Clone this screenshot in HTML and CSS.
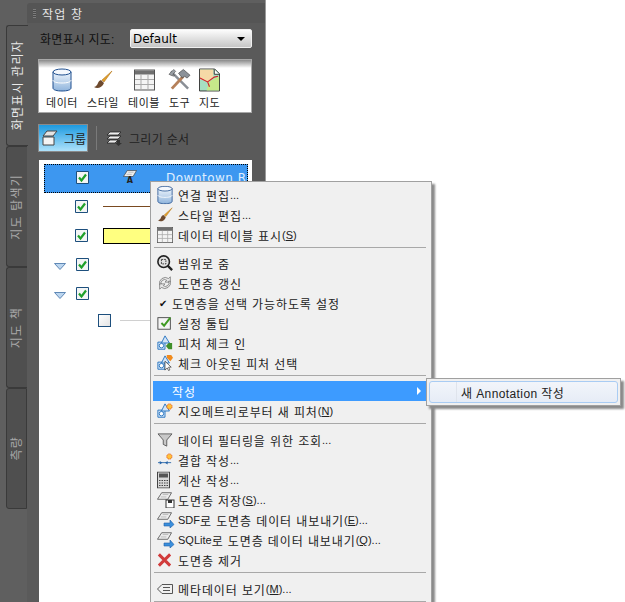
FILE: index.html
```html
<!DOCTYPE html>
<html lang="ko">
<head>
<meta charset="utf-8">
<title>작업 창</title>
<link rel="stylesheet" href="styles.css">
</head>
<body>
<svg class="defs" width="0" height="0">
  <defs>
    <linearGradient id="dbg" x1="0" y1="0" x2="0" y2="1"><stop offset="0" stop-color="#eef5fc"/><stop offset="1" stop-color="#8fb4dc"/></linearGradient>
    <symbol id="db" viewBox="0 0 20 24">
      <path d="M1 4v16c0 2 4 3 9 3s9-1 9-3V4z" fill="url(#dbg)" stroke="#1f4f8f"/>
      <ellipse cx="10" cy="4" rx="9" ry="3" fill="#f4f8fd" stroke="#1f4f8f"/>
      <path d="M1 12c0 2 4 3 9 3s9-1 9-3" fill="none" stroke="#fff"/>
    </symbol>
    <symbol id="brush" viewBox="0 0 20 20">
      <path d="M19 1 9 10l2 2z" fill="#e0a02c" stroke="#b5761a" stroke-width=".6"/>
      <path d="M8 10c-3 1-3 4-4 5-1 1-2 2-3 2 3 2 8 1 10-4z" fill="#6e4a2e"/>
    </symbol>
    <symbol id="table" viewBox="0 0 21 21">
      <rect x=".5" y=".5" width="20" height="20" fill="#f4f4f4" stroke="#555"/>
      <rect x="1" y="1" width="19" height="4" fill="#6f6f6f"/>
      <path d="M7 5v15M14 5v15M1 10h19M1 15h19" stroke="#a9a9a9" fill="none"/>
    </symbol>
    <symbol id="tools" viewBox="0 0 24 24">
      <path d="M3 3l18 18" stroke="#8a8f96" stroke-width="2.6"/>
      <path d="M1 6 6 1l2 2-3 3 2 1-1 1-3-1z" fill="#9aa0a6" stroke="#444" stroke-width=".6"/>
      <path d="M4 21 16 8" stroke="#b5805a" stroke-width="3"/>
      <path d="M11 5l5-4 7 6-3 3-3-2-2 2z" fill="#8c9299" stroke="#333" stroke-width=".6"/>
    </symbol>
    <symbol id="map" viewBox="0 0 22 24">
      <path d="M.5.5h16l5 5v18H.5z" fill="#a7dfc2" stroke="#333"/>
      <path d="M1 1h14v9l-5 4-9-3z" fill="#f6d9a6"/>
      <path d="M10 14l11-6v15H8z" fill="#c6e88a"/>
      <path d="M1 10l8 4 7-5 4-1M9 14l2 5" fill="none" stroke="#d0202a" stroke-width="1.2"/>
      <path d="M16 1v5h5" fill="#fff" stroke="#333"/>
    </symbol>
    <symbol id="layer" viewBox="0 0 16 8">
      <path d="M5 .5h10.500l-4 7H.5z" fill="#eee" stroke="#444" stroke-width=".8"/>
      <path d="M6 2.500h6M4 5h6" stroke="#aaa" stroke-width=".8"/>
    </symbol>
    <symbol id="check" viewBox="0 0 13 13">
      <path d="M.5.5h12v12H.5z" fill="#f3f5f5" stroke="#1d4f7d"/>
      <path d="M3 6.500l2.500 3L10 3.500" fill="none" stroke="#1fa02a" stroke-width="2.200"/>
    </symbol>
    <symbol id="tri" viewBox="0 0 12 7">
      <path d="M.5.500h11L6 6.500z" fill="#bcd6ef" stroke="#5f88b6"/>
    </symbol>
    <symbol id="zoom" viewBox="0 0 18 18">
      <circle cx="7.500" cy="7.500" r="6.500" fill="#e2e2e2" stroke="#222" stroke-width="1.800"/>
      <path d="M12 12l5 5" stroke="#222" stroke-width="2.600"/>
      <path d="M5 5h5v5H5z" fill="none" stroke="#333" stroke-dasharray="2 1"/>
    </symbol>
    <symbol id="refresh" viewBox="0 0 18 18">
      <path d="M3 11a6.500 6.500 0 0 1 10-7l2-2v6h-6l2-2a4 4 0 0 0-6 5z" fill="#e8e8e8" stroke="#6b6b6b" stroke-width=".8"/>
      <path d="M15 7a6.500 6.500 0 0 1-10 7l-2 2v-6h6l-2 2a4 4 0 0 0 6-5z" fill="#e8e8e8" stroke="#6b6b6b" stroke-width=".8"/>
    </symbol>
    <symbol id="tip" viewBox="0 0 18 18">
      <rect x="1" y="3" width="14" height="13" fill="#f4f4f4" stroke="#444"/>
      <path d="M5 9l3 3 7-9" fill="none" stroke="#3f9a23" stroke-width="2.200"/>
    </symbol>
    <symbol id="feat" viewBox="0 0 18 18">
      <path d="M1 8h8v8H1z" fill="#d5e6f8" stroke="#1e6fbe"/>
      <path d="M9 1l5 8H5z" fill="#d5e6f8" stroke="#1e6fbe"/>
      <circle cx="5" cy="12" r="2.500" fill="#fff" stroke="#1e6fbe"/>
    </symbol>
    <symbol id="feat-in" viewBox="0 0 18 18">
      <use href="#feat" width="18" height="18"/>
      <path d="M17 9v7h-4l-3-3.500L13 9z" fill="#3f8f2a"/>
    </symbol>
    <symbol id="feat-out" viewBox="0 0 18 18">
      <use href="#feat" width="18" height="18"/>
      <path d="M11 0h5l2 3-3 4-4-4z" fill="#f08a1d"/>
      <path d="M9 7v10l2.500-2.500 1.500 3 1.500-.8-1.500-3H16z" fill="#fff" stroke="#222" stroke-width=".7"/>
    </symbol>
    <symbol id="feat-new" viewBox="0 0 18 18">
      <use href="#feat" width="18" height="18"/>
      <circle cx="14" cy="4" r="3" fill="#ffc23a" stroke="#e2501c" stroke-dasharray="1.500 .8"/>
    </symbol>
    <symbol id="funnel" viewBox="0 0 18 16">
      <path d="M1 1h16l-6 7v7l-4-2V8z" fill="#c8c8c8" stroke="#555"/>
    </symbol>
    <symbol id="join" viewBox="0 0 18 16">
      <path d="M1 11h15" stroke="#2563a8"/>
      <path d="M3 9l3 2-3 2zM12 9l-3 2 3 2z" fill="#2563a8"/>
      <circle cx="14" cy="4" r="3" fill="#ffc23a" stroke="#e2501c" stroke-dasharray="1.500 .8"/>
    </symbol>
    <symbol id="calc" viewBox="0 0 13 17">
      <rect x=".5" y=".5" width="12" height="16" fill="#d9d9d9" stroke="#444"/>
      <rect x="2" y="2" width="9" height="4" fill="#555"/>
      <path d="M2 9h9M2 11.500h9M2 14h9" stroke="#444" stroke-dasharray="1.500 1"/>
    </symbol>
    <symbol id="save" viewBox="0 0 18 16">
      <use href="#layer" width="15" height="8"/>
      <rect x="9" y="8" width="8" height="8" fill="#fff" stroke="#333"/>
      <rect x="11" y="8" width="4" height="3" fill="#333"/>
    </symbol>
    <symbol id="export" viewBox="0 0 18 16">
      <use href="#layer" width="15" height="8"/>
      <path d="M7 11h6V8l4 4.500L13 16v-2H7z" fill="#3b8fdc" stroke="#1e5fa8" stroke-width=".6"/>
    </symbol>
    <symbol id="cross" viewBox="0 0 16 16">
      <path d="M2 2l12 12M14 2 2 14" stroke="#d13b3b" stroke-width="3.200"/>
    </symbol>
    <symbol id="tag" viewBox="0 0 16 10">
      <path d="M5 .5h10.500v9H5L.5 5z" fill="#f0f0f0" stroke="#555"/>
      <path d="M6 3.500h7M6 6.500h7" stroke="#555"/>
    </symbol>
  </defs>
</svg>

<div class="app">
  <nav class="tabs">
    <div class="tab tab-active"><span>화면표시 관리자</span></div>
    <div class="tab"><span>지도 탐색기</span></div>
    <div class="tab"><span>지도 책</span></div>
    <div class="tab"><span>측량</span></div>
  </nav>

  <section class="panel">
    <header class="panel-head">
      <i class="grip"></i>
      <span>작업 창</span>
    </header>
    <div class="panel-body">
      <div class="map-row">
        <label class="map-label">화면표시 지도:</label>
        <div class="select"><span>Default</span><i class="caret"></i></div>
      </div>

      <div class="ribbon">
        <div class="tool"><svg class="ti" width="20" height="24"><use href="#db"/></svg><span>데이터</span></div>
        <div class="tool"><svg class="ti" width="20" height="20"><use href="#brush"/></svg><span>스타일</span></div>
        <div class="tool"><svg class="ti" width="21" height="21"><use href="#table"/></svg><span>테이블</span></div>
        <div class="tool tool-sm"><svg class="ti" width="23" height="23"><use href="#tools"/></svg><span>도구</span></div>
        <div class="tool tool-sm"><svg class="ti" width="21" height="24"><use href="#map"/></svg><span>지도</span></div>
      </div>

      <div class="view-row">
        <div class="view-btn view-on"><svg width="16" height="16" viewBox="0 0 16 16"><path d="M1 7h11v8H1z" fill="#f4f4f4" stroke="#444"/><path d="M5 1h10l-4 5H1z" fill="#e4e4e4" stroke="#444"/></svg><span>그룹</span></div>
        <i class="view-sep"></i>
        <div class="view-btn"><svg width="16" height="15" viewBox="0 0 16 15"><path d="M4 1h11l-3 3H1zM4 5h11l-3 3H1zM4 9h8l-3 3H1z" fill="#eee" stroke="#222" stroke-width=".8"/><path d="M11 9h3v3h2l-3.500 3L9 12h2z" fill="#333"/></svg><span>그리기 순서</span></div>
      </div>

      <div class="tree">
        <div class="row row-sel">
          <svg class="chk" width="13" height="13"><use href="#check"/></svg>
          <span class="sym-a"><svg width="14" height="7"><use href="#layer"/></svg><b>A</b></span>
          <span class="row-name">Downtown Red</span>
        </div>
        <div class="row">
          <svg class="chk" width="13" height="13"><use href="#check"/></svg>
          <i class="sym-line"></i>
        </div>
        <div class="row">
          <svg class="chk" width="13" height="13"><use href="#check"/></svg>
          <i class="sym-box"></i>
        </div>
        <div class="row">
          <svg class="tri" width="12" height="7"><use href="#tri"/></svg>
          <svg class="chk" width="13" height="13"><use href="#check"/></svg>
        </div>
        <div class="row">
          <svg class="tri" width="12" height="7"><use href="#tri"/></svg>
          <svg class="chk" width="13" height="13"><use href="#check"/></svg>
        </div>
        <div class="row row-child">
          <i class="unchk"></i>
          <i class="sym-gray"></i>
        </div>
      </div>
    </div>
  </section>
</div>

<div class="menu">
  <div class="mi"><svg class="mic" width="16" height="19"><use href="#db"/></svg>연결 편집<span class="lat">...</span></div>
  <div class="mi"><svg class="mic" width="16" height="16"><use href="#brush"/></svg>스타일 편집<span class="lat">...</span></div>
  <div class="mi"><svg class="mic" width="16" height="16"><use href="#table"/></svg>데이터 테이블 표시<span class="lat">(<u>S</u>)</span></div>
  <div class="sep"></div>
  <div class="mi"><svg class="mic" width="16" height="16"><use href="#zoom"/></svg>범위로 줌</div>
  <div class="mi"><svg class="mic" width="16" height="16"><use href="#refresh"/></svg>도면층 갱신</div>
  <div class="mi mi-check"><span class="tick">✔</span>도면층을 선택 가능하도록 설정</div>
  <div class="mi"><svg class="mic" width="16" height="16"><use href="#tip"/></svg>설정 툴팁</div>
  <div class="mi"><svg class="mic" width="16" height="16"><use href="#feat-in"/></svg>피처 체크 인</div>
  <div class="mi"><svg class="mic" width="16" height="16"><use href="#feat-out"/></svg>체크 아웃된 피처 선택</div>
  <div class="sep"></div>
  <div class="mi mi-hi">작성<i class="arrow"></i></div>
  <div class="mi"><svg class="mic" width="16" height="16"><use href="#feat-new"/></svg>지오메트리로부터 새 피처<span class="lat">(<u>N</u>)</span></div>
  <div class="sep sep-wide"></div>
  <div class="mi"><svg class="mic" width="16" height="14"><use href="#funnel"/></svg>데이터 필터링을 위한 조회<span class="lat">...</span></div>
  <div class="mi"><svg class="mic" width="16" height="14"><use href="#join"/></svg>결합 작성<span class="lat">...</span></div>
  <div class="mi"><svg class="mic" width="13" height="17"><use href="#calc"/></svg>계산 작성<span class="lat">...</span></div>
  <div class="mi"><svg class="mic" width="18" height="16"><use href="#save"/></svg>도면층 저장<span class="lat">(<u>S</u>)...</span></div>
  <div class="mi"><svg class="mic" width="18" height="16"><use href="#export"/></svg><span class="lat">SDF</span>로 도면층 데이터 내보내기<span class="lat">(<u>E</u>)...</span></div>
  <div class="mi"><svg class="mic" width="18" height="16"><use href="#export"/></svg><span class="lat">SQLite</span>로 도면층 데이터 내보내기<span class="lat">(<u>Q</u>)...</span></div>
  <div class="mi"><svg class="mic" width="15" height="15"><use href="#cross"/></svg>도면층 제거</div>
  <div class="sep sep-wide"></div>
  <div class="mi"><svg class="mic" width="16" height="10"><use href="#tag"/></svg>메타데이터 보기<span class="lat">(<u>M</u>)...</span></div>
  <div class="sep"></div>
</div>

<div class="submenu">
  <div class="sub-item"><span>새 Annotation 작성</span></div>
</div>
</body>
</html>
```

FILE: styles.css
```css
* { box-sizing: border-box; }
html, body { margin: 0; height: 602px; overflow: hidden; background: #fff; }
body { font: 12px "Liberation Sans", "Noto Sans CJK KR", sans-serif; color: #222; position: relative; }
i { display: block; }
.defs { position: absolute; }

.app { display: flex; width: 266px; height: 602px; background: #5f5f5f; border-right: 1px solid #9a9a9a; }

.tabs { width: 27px; padding: 25px 0 0 6px; display: flex; flex-direction: column; flex: none; }
.tab { width: 21px; height: 121px; display: flex; align-items: center; justify-content: center; background: #4f4f4f; border: 1px solid #3a3a3a; border-right: 0; border-radius: 3px 0 0 3px; color: #a9a9a9; position: relative; }
.tab:last-child { border-right: 1px solid #3a3a3a; }
.tab span { writing-mode: vertical-rl; text-orientation: sideways; transform: rotate(180deg); font-size: 12px; line-height: 14px; letter-spacing: 1.2px; white-space: nowrap; }
.tab-active { background: #5a5a5a; color: #e8e8e8; border-right: 0; margin-right: -1px; width: 22px; z-index: 1; }

.panel { flex: 1; padding-top: 3px; display: flex; flex-direction: column; min-width: 0; }
.panel-head { height: 20px; display: flex; align-items: center; gap: 6px; padding: 0 0 0 6px; background: #555; color: #e6e6e6; border-radius: 3px 0 0 0; letter-spacing: 1.2px; }
.grip { width: 3px; height: 9px; background: repeating-linear-gradient(#7d7d7d 0 1px, #4a4a4a 1px 2px); }
.panel-body { flex: 1; background: #5a5a5a; padding: 6px 13px 0 11px; display: flex; flex-direction: column; min-height: 0; }

.map-row { display: flex; align-items: center; height: 19px; gap: 17px; padding-left: 2px; }
.map-label { width: 73px; white-space: nowrap; color: #111; letter-spacing: .2px; font-size: 12px; }
.select { width: 122px; height: 19px; flex: none; border: 1px solid #f0f0f0; border-radius: 2px; background: linear-gradient(#fcfcfc, #c6c6c6); display: flex; align-items: center; justify-content: space-between; padding: 0 4px 0 2px; color: #000; font: 12px "DejaVu Sans", sans-serif; }
.caret { width: 0; height: 0; border: 4px solid transparent; border-top: 4px solid #000; border-bottom: 0; margin-right: 2px; }

.ribbon { margin-top: 11px; height: 54px; background: linear-gradient(#8a8a8a, #fff 8px); border: 1px solid #a8a8a8; display: flex; padding: 8px 0 0 7px; gap: 9px; width: 214px; }
.tool { width: 32px; display: flex; flex-direction: column; align-items: center; font-size: 11px; color: #222; white-space: nowrap; }
.tool-sm { width: 21px; }
.tool span { margin-top: 4px; line-height: 14px; letter-spacing: .5px; }
.ti { height: 24px; }

.view-row { display: flex; align-items: center; margin-top: 11px; height: 28px; }
.view-btn { display: flex; align-items: center; gap: 7px; color: #222; letter-spacing: .3px; white-space: nowrap; }
.view-btn svg { flex: none; }
.view-on { width: 50px; height: 28px; padding-left: 3px; gap: 6px; letter-spacing: 0; background: linear-gradient(#1d9ae0, #aee2fb); border: 1px solid #8a8a8a; }
.view-sep { width: 1px; height: 24px; background: #7a7a7a; margin: 0 9px 0 8px; }

.tree { margin: 8px 0 0 1px; flex: 1; background: #fff; padding: 4px 4px 0 5px; width: 213px; display: flex; flex-direction: column; }
.row { height: 29px; display: flex; align-items: center; padding-left: 31px; flex: none; position: relative; }
.row > * { flex: none; }
.row:has(.tri) { padding-left: 10px; gap: 10px; }
.tri { margin-top: 4px; }
.row-sel { background: #3d97f0; border: 1px dotted #000; padding: 0 0 2px 31px; overflow: hidden; white-space: nowrap; color: #dfeeff; letter-spacing: .5px; margin-bottom: -1px; font: 12px "DejaVu Sans", sans-serif; }
.sym-a { width: 14px; margin-left: 34px; display: flex; flex-direction: column; align-items: center; color: #222; }
.sym-a b { font: bold 8px/8px "DejaVu Sans", sans-serif; }
.row-name { margin-left: 29px; }
.sym-line { width: 50px; height: 1px; background: #7a4a20; margin-left: 15px; }
.sym-box { width: 50px; height: 16px; background: #ffff80; border: 1px solid #000; margin-left: 15px; }
.row-child { padding-left: 54px; height: 25px; }
.unchk { width: 13px; height: 13px; border: 1px solid #1d4f7d; background: linear-gradient(135deg, #fff, #e4e4e4); }
.sym-gray { width: 40px; height: 1px; background: #d0d0d0; margin-left: 9px; }

.menu { position: absolute; left: 150px; top: 181px; width: 282px; padding: 3px 2px 0; background: #f0f0f0; border: 1px solid #a0a0a0; box-shadow: 3px 3px 2px #8a8a8a; letter-spacing: .9px; }
.mi { height: 20px; display: flex; align-items: center; padding-left: 25px; position: relative; white-space: pre; color: #222; }
.lat { font-size: 11px; letter-spacing: 0; }
.mic { position: absolute; left: 4px; top: 50%; transform: translateY(-50%); }
.mi-check { padding-left: 19px; }
.tick { position: absolute; left: 6px; font-size: 10px; color: #111; }
.mi-hi { background: #3d9bff; color: #fff; padding-left: 19px; margin-right: 3px; }
.arrow { position: absolute; right: 5px; top: 6px; width: 0; height: 0; border-left: 4px solid #fff; border-top: 4px solid transparent; border-bottom: 4px solid transparent; }
.sep { height: 8px; position: relative; }
.sep::before { content: ""; position: absolute; left: 1px; right: 3px; top: 2px; height: 1px; background: #a8a8a8; }
.sep-wide { height: 9px; }

.submenu { position: absolute; left: 426px; top: 378px; width: 195px; height: 28px; padding: 2px; background: #f0f0f0; border: 1px solid #a0a0a0; box-shadow: 3px 3px 2px #8a8a8a; }
.sub-item { height: 22px; border: 1px solid #a9ccf3; border-radius: 3px; background: linear-gradient(#f2f5fa, #e6ecf6); display: flex; align-items: center; padding-left: 31px; color: #222; letter-spacing: .4px; position: relative; }
.sub-item::before { content: ""; position: absolute; left: 26px; top: 0; bottom: 0; width: 1px; background: #dfe4ec; }
```
